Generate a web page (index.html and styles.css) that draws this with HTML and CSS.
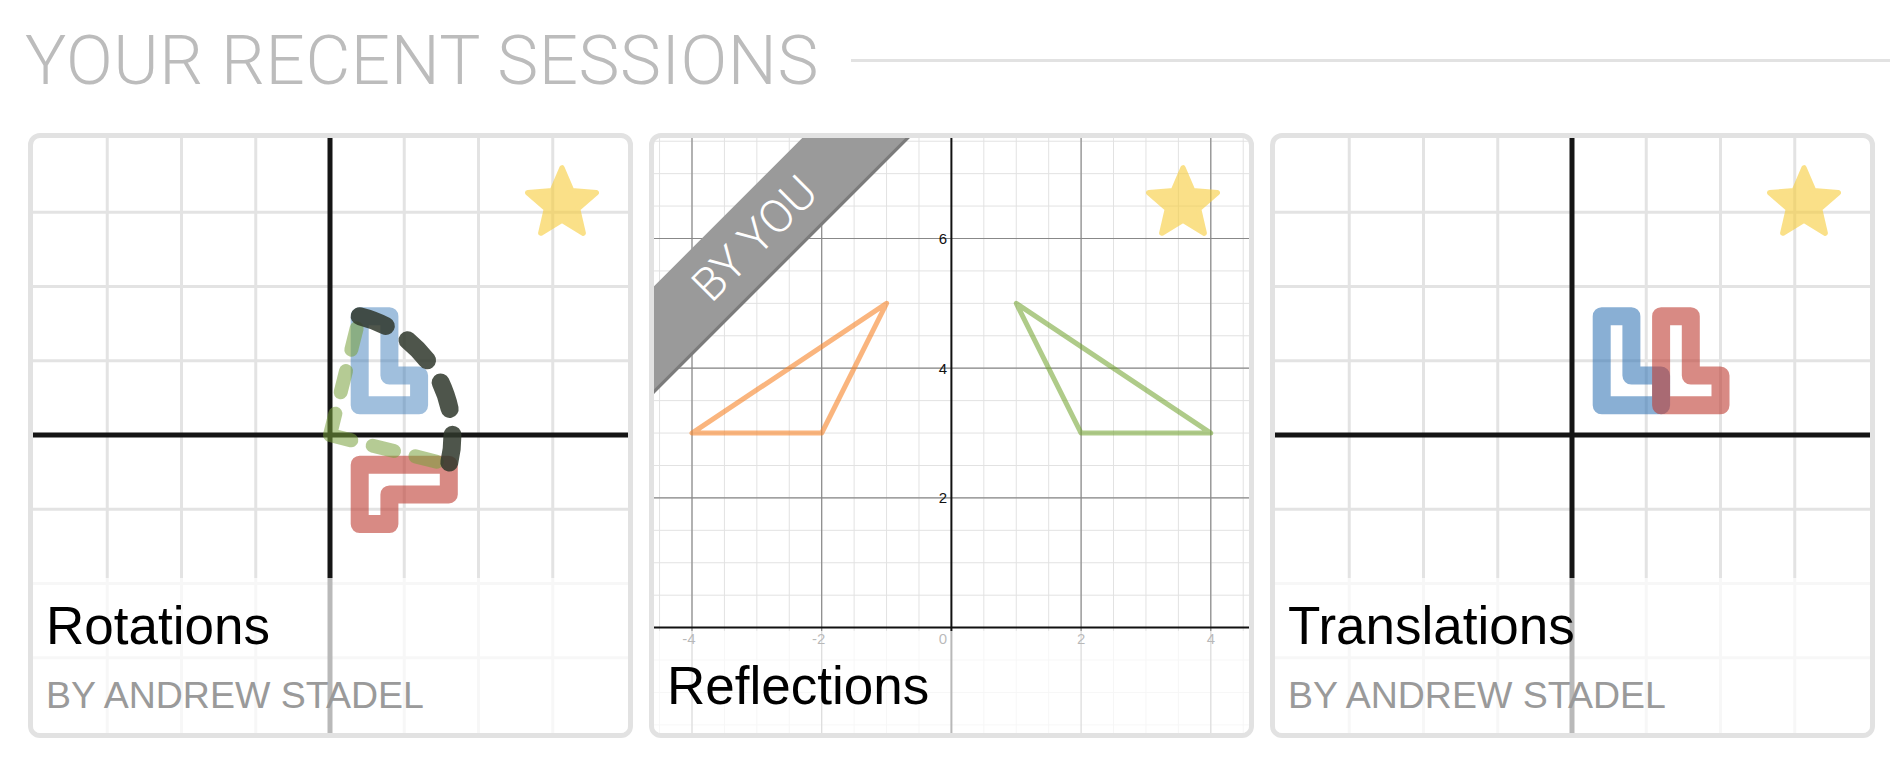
FILE: index.html
```html
<!DOCTYPE html>
<html lang="en">
<head>
<meta charset="utf-8">
<title>Your recent sessions</title>
<link rel="stylesheet" href="styles.css">
</head>
<body>
<main class="page">
  <header class="section-head">
    <h1 class="section-title">YOUR RECENT SESSIONS</h1>
    <div class="section-rule"></div>
  </header>

  <div class="cards">
    <!-- Card 1: Rotations -->
    <article class="card">
      <svg class="graph soft" viewBox="0 0 595 595">
        <path class="coarse-grid" d="M74.25 0V595M148.5 0V595M222.75 0V595M371.25 0V595M445.5 0V595M519.75 0V595M0 74.25H595M0 148.5H595M0 222.75H595M0 371.25H595M0 445.5H595M0 519.75H595"/>
        <path class="coarse-axis" d="M297 0V595M0 297H595"/>
        <polygon class="shape-blue" points="326.7,267.3 386.1,267.3 386.1,237.6 356.4,237.6 356.4,178.2 326.7,178.2"/>
        <polygon class="shape-red" points="326.7,326.7 326.7,386.1 356.4,386.1 356.4,356.4 415.8,356.4 415.8,326.7"/>
        <path class="dash-green" d="M297 297L326.7 178.2M297 297L415.8 326.7"/>
        <path class="dash-dark" d="M326.7 178.2A122.46 122.46 0 0 1 415.8 326.7"/>
      </svg>
      <svg class="star" viewBox="1.2 1.2 21.6 20.6"><path class="star-shape" d="M12 17.27L18.18 21l-1.64-7.03L22 9.24l-7.19-.61L12 2 9.19 8.63 2 9.24l5.46 4.73L5.82 21z"/></svg>
      <div class="caption">
        <div class="caption-title">Rotations</div>
        <div class="caption-author">BY ANDREW STADEL</div>
      </div>
    </article>

    <!-- Card 2: Reflections -->
    <article class="card">
      <svg class="graph" viewBox="0 0 595 595">
        <path class="fine-grid" d="M5.575 0V595M38 0V595M70.425 0V595M102.85 0V595M135.275 0V595M167.7 0V595M200.125 0V595M232.55 0V595M264.975 0V595M329.825 0V595M362.25 0V595M394.675 0V595M427.1 0V595M459.525 0V595M491.95 0V595M524.375 0V595M556.8 0V595M589.225 0V595M0 3.225H595M0 35.65H595M0 68.075H595M0 100.5H595M0 132.925H595M0 165.35H595M0 197.775H595M0 230.2H595M0 262.625H595M0 295.05H595M0 327.475H595M0 359.9H595M0 392.325H595M0 424.75H595M0 457.175H595M0 522.025H595M0 554.45H595M0 586.875H595"/>
        <path class="major-grid" d="M38 0V595M167.7 0V595M427.1 0V595M556.8 0V595M0 100.5H595M0 230.2H595M0 359.9H595"/>
        <path class="fine-axis" d="M297.4 0V595M0 489.6H595"/>
        <polygon class="tri-orange" points="38,295.05 167.7,295.05 232.55,165.35"/>
        <polygon class="tri-green" points="362.25,165.35 427.1,295.05 556.8,295.05"/>
        <text class="tick tick-y" x="293" y="106">6</text>
        <text class="tick tick-y" x="293" y="235.7">4</text>
        <text class="tick tick-y" x="293" y="365.4">2</text>
        <text class="tick tick-x" x="35" y="506">-4</text>
        <text class="tick tick-x" x="164.7" y="506">-2</text>
        <text class="tick tick-y" x="293" y="506">0</text>
        <text class="tick tick-x" x="427.1" y="506">2</text>
        <text class="tick tick-x" x="556.8" y="506">4</text>
      </svg>
      <div class="ribbon">BY YOU</div>
      <svg class="star" viewBox="1.2 1.2 21.6 20.6"><path class="star-shape" d="M12 17.27L18.18 21l-1.64-7.03L22 9.24l-7.19-.61L12 2 9.19 8.63 2 9.24l5.46 4.73L5.82 21z"/></svg>
      <div class="caption caption--solo">
        <div class="caption-title">Reflections</div>
      </div>
    </article>

    <!-- Card 3: Translations -->
    <article class="card">
      <svg class="graph soft" viewBox="0 0 595 595">
        <path class="coarse-grid" d="M74.25 0V595M148.5 0V595M222.75 0V595M371.25 0V595M445.5 0V595M519.75 0V595M0 74.25H595M0 148.5H595M0 222.75H595M0 371.25H595M0 445.5H595M0 519.75H595"/>
        <path class="coarse-axis" d="M297 0V595M0 297H595"/>
        <polygon class="shape-blue shape-blue--deep" points="326.7,267.3 386.1,267.3 386.1,237.6 356.4,237.6 356.4,178.2 326.7,178.2"/>
        <polygon class="shape-red" points="386.1,267.3 445.5,267.3 445.5,237.6 415.8,237.6 415.8,178.2 386.1,178.2"/>
      </svg>
      <svg class="star" viewBox="1.2 1.2 21.6 20.6"><path class="star-shape" d="M12 17.27L18.18 21l-1.64-7.03L22 9.24l-7.19-.61L12 2 9.19 8.63 2 9.24l5.46 4.73L5.82 21z"/></svg>
      <div class="caption">
        <div class="caption-title">Translations</div>
        <div class="caption-author">BY ANDREW STADEL</div>
      </div>
    </article>
  </div>
</main>
</body>
</html>
```

FILE: styles.css
```css
html, body {
  margin: 0;
  padding: 0;
  background: #ffffff;
}

.page {
  padding: 26px 0 0 25px;
}

.section-head {
  display: flex;
  align-items: center;
  gap: 32px;
}

.section-title {
  margin: 0;
  font-family: Roboto, "Liberation Sans", Arial, sans-serif;
  font-weight: 300;
  font-size: 69px;
  line-height: 69px;
  letter-spacing: 0.6px;
  color: #bcbcbc;
  white-space: nowrap;
}

.section-rule {
  flex: 1;
  height: 3px;
  background: #e2e2e2;
}

.cards {
  display: flex;
  gap: 16px;
  margin-top: 38px;
  padding-left: 3px;
}

.card {
  position: relative;
  flex: none;
  box-sizing: border-box;
  width: 605px;
  height: 605px;
  border: 5px solid #e2e2e2;
  border-radius: 12px;
  overflow: hidden;
  background: #ffffff;
}

.graph {
  display: block;
  width: 595px;
  height: 595px;
}

.soft {
  filter: blur(0.5px);
}

/* coarse grid (cards 1 and 3) */
.coarse-grid {
  fill: none;
  stroke: #e3e3e3;
  stroke-width: 3;
}

.coarse-axis {
  fill: none;
  stroke: #151515;
  stroke-width: 5;
}

.shape-blue {
  fill: none;
  stroke: rgb(45, 112, 179);
  stroke-opacity: 0.45;
  stroke-width: 18;
  stroke-linejoin: round;
}

.shape-blue--deep {
  stroke-opacity: 0.56;
}

.shape-red {
  fill: none;
  stroke: rgb(190, 60, 50);
  stroke-opacity: 0.6;
  stroke-width: 18;
  stroke-linejoin: round;
}

.dash-green {
  fill: none;
  stroke: rgb(120, 160, 60);
  stroke-opacity: 0.55;
  stroke-width: 14;
  stroke-linecap: round;
  stroke-dasharray: 22 22;
}

.dash-dark {
  fill: none;
  stroke: #2f372b;
  stroke-opacity: 0.85;
  stroke-width: 18;
  stroke-linecap: round;
  stroke-dasharray: 28 26;
}

/* fine desmos grid (card 2) */
.fine-grid {
  fill: none;
  stroke: #e2e2e2;
  stroke-width: 1;
}

.major-grid {
  fill: none;
  stroke: #888888;
  stroke-width: 1.2;
}

.fine-axis {
  fill: none;
  stroke: #111111;
  stroke-width: 2;
}

.tri-orange {
  fill: none;
  stroke: rgb(247, 132, 40);
  stroke-opacity: 0.6;
  stroke-width: 5;
  stroke-linejoin: round;
}

.tri-green {
  fill: none;
  stroke: rgb(110, 160, 40);
  stroke-opacity: 0.55;
  stroke-width: 5;
  stroke-linejoin: round;
}

.tick {
  font-family: "Liberation Sans", Arial, sans-serif;
  font-size: 15px;
  fill: #111111;
}

.tick-y {
  text-anchor: end;
}

.tick-x {
  text-anchor: middle;
}

/* favourite star */
.star {
  position: absolute;
  top: 27px;
  right: 29px;
  width: 74px;
  height: 71px;
  opacity: 0.6;
}

.star-shape {
  fill: #f7cd3a;
  stroke: #f7cd3a;
  stroke-width: 1.6;
  stroke-linejoin: round;
}

/* "BY YOU" corner ribbon */
.ribbon {
  position: absolute;
  left: -109px;
  top: 63px;
  box-sizing: border-box;
  width: 420px;
  height: 76px;
  border-bottom: 3px solid #7b7b7b;
  background: #9a9a9a;
  transform: rotate(-45deg);
  display: flex;
  align-items: center;
  justify-content: center;
  color: #ffffff;
  font-family: Roboto, "Liberation Sans", Arial, sans-serif;
  font-weight: 300;
  font-size: 46px;
  line-height: 1;
}

/* caption band */
.caption {
  position: absolute;
  left: 0;
  right: 0;
  bottom: 0;
  padding: 18px 13px 17px;
  background: rgba(255, 255, 255, 0.7);
}

.caption--solo {
  padding-top: 25px;
}

.caption-title {
  font-family: "Liberation Sans", Arial, sans-serif;
  font-size: 53px;
  line-height: 60px;
  color: #000000;
}

.caption-author {
  margin-top: 18px;
  font-family: "Liberation Sans", Arial, sans-serif;
  font-size: 37.5px;
  line-height: 42px;
  color: #9a9a9a;
}
```
